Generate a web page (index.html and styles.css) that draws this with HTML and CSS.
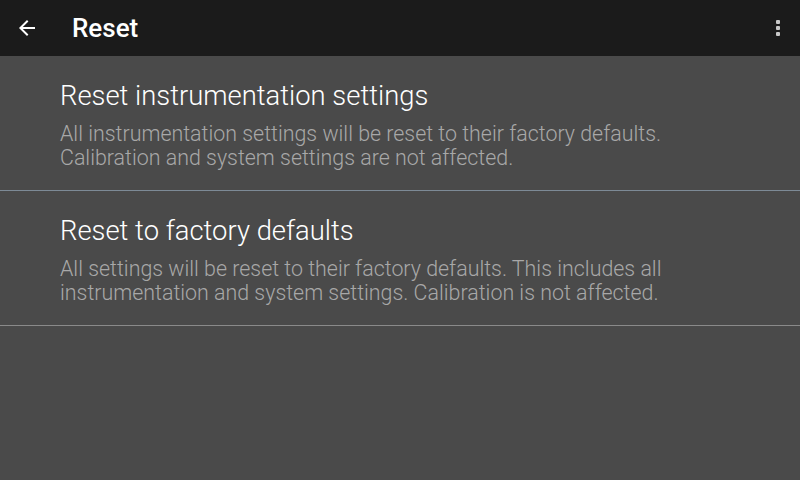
FILE: index.html
```html
<!DOCTYPE html>
<html>
<head>
<meta charset="utf-8">
<link rel="stylesheet" href="styles.css">
</head>
<body>
<div class="app">
  <header class="toolbar">
    <div class="nav-btn">
      <svg width="24" height="24" viewBox="0 0 24 24"><path fill="#ffffff" d="M20 11H7.83l5.59-5.59L12 4l-8 8 8 8 1.41-1.41L7.83 13H20v-2z"/></svg>
    </div>
    <h1 class="title">Reset</h1>
    <div class="menu-btn">
      <span class="dot"></span><span class="dot"></span><span class="dot"></span>
    </div>
  </header>
  <main class="list">
    <div class="item first">
      <div class="item-title">Reset instrumentation settings</div>
      <div class="item-desc">All instrumentation settings will be reset to their factory defaults.<br>Calibration and system settings are not affected.</div>
    </div>
    <div class="item">
      <div class="item-title">Reset to factory defaults</div>
      <div class="item-desc">All settings will be reset to their factory defaults. This includes all<br>instrumentation and system settings. Calibration is not affected.</div>
    </div>
  </main>
</div>
</body>
</html>
```
FILE: styles.css
```css
* { box-sizing: border-box; }
html, body { margin: 0; padding: 0; }
body {
  width: 800px;
  height: 480px;
  background: #4a4a4a;
  font-family: Roboto, "Noto Sans", sans-serif;
  overflow: hidden;
}
.app { display: flex; flex-direction: column; height: 480px; }
.toolbar {
  height: 56px;
  background: #1b1b1b;
  display: flex;
  align-items: center;
  flex-shrink: 0;
}
.nav-btn {
  width: 56px;
  height: 56px;
  display: flex;
  align-items: center;
  justify-content: center;
  margin-left: -1px;
}
.title {
  margin: 0 0 0 17px;
  color: #ffffff;
  font-size: 26px;
  font-weight: 500;
  flex: 1;
}
.menu-btn {
  width: 44px;
  height: 56px;
  display: flex;
  flex-direction: column;
  align-items: center;
  justify-content: center;
  gap: 2px;
}
.dot {
  width: 4px;
  height: 4px;
  background: #c8c8c8;
  border-radius: 1px;
}
.list { display: flex; flex-direction: column; }
.item {
  height: 135px;
  padding: 24px 60px 0;
  border-bottom: 1px solid #8a8a8a;
}
.item.first { border-bottom-color: #7d8a96; }
.item-title {
  color: #ffffff;
  font-size: 27.4px;
  line-height: 32px;
  font-weight: 300;
}
.item-desc {
  margin-top: 10px;
  color: #a8a8a8;
  font-size: 21.4px;
  line-height: 24px;
  font-weight: 300;
}
```
